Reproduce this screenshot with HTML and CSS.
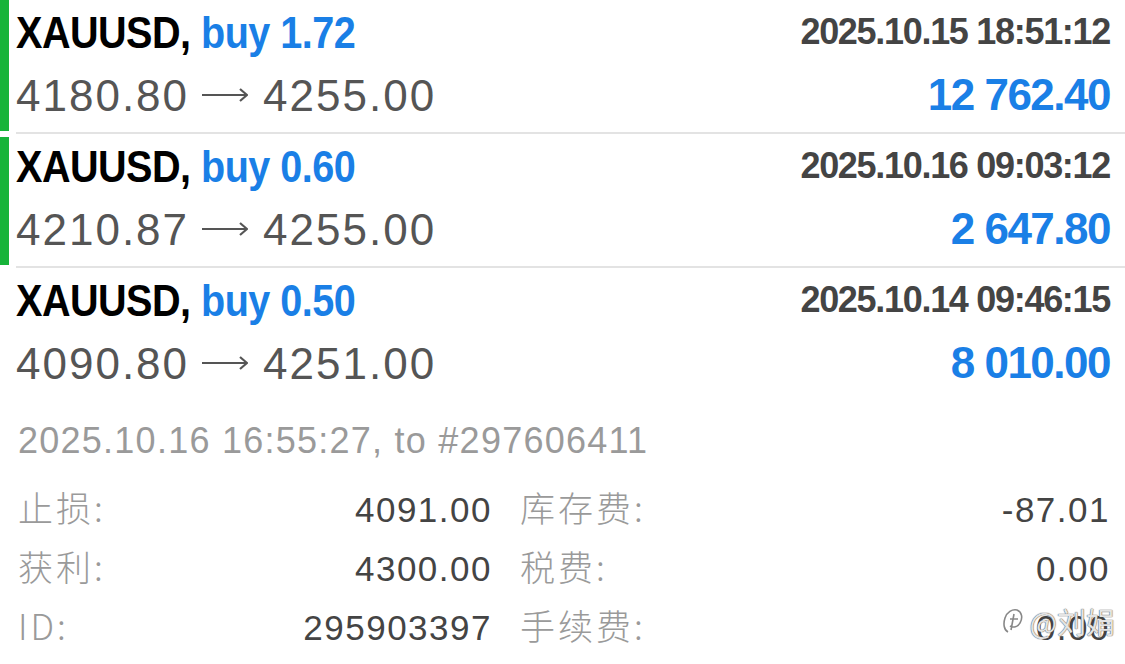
FILE: index.html
```html
<!DOCTYPE html>
<html lang="zh">
<head>
    <meta charset="UTF-8">
    <meta name="viewport" content="width=device-width, initial-scale=1.0">
    <title>持仓</title>
    <link rel="stylesheet" href="styles.css">
</head>
<body>

    <div class="list">
        <!-- 持仓 -->
        <div class="trade">
            <div class="mark"></div>
            <div class="body">
                <div class="left">
                    <div class="title">XAUUSD, <span class="side">buy 1.72</span></div>
                    <div class="prices">4180.80<svg class="arrow" width="46" height="14" viewBox="0 0 46 14"><path d="M0 7 H45 M38 1 L45 7 L38 13" fill="none" stroke="#555" stroke-width="2.2"/></svg>4255.00</div>
                </div>
                <div class="right">
                    <div class="time">2025.10.15 18:51:12</div>
                    <div class="profit">12 762.40</div>
                </div>
            </div>
        </div>

        <div class="trade">
            <div class="mark"></div>
            <div class="body">
                <div class="left">
                    <div class="title">XAUUSD, <span class="side">buy 0.60</span></div>
                    <div class="prices">4210.87<svg class="arrow" width="46" height="14" viewBox="0 0 46 14"><path d="M0 7 H45 M38 1 L45 7 L38 13" fill="none" stroke="#555" stroke-width="2.2"/></svg>4255.00</div>
                </div>
                <div class="right">
                    <div class="time">2025.10.16 09:03:12</div>
                    <div class="profit">2 647.80</div>
                </div>
            </div>
        </div>

        <div class="trade open">
            <div class="mark"></div>
            <div class="body">
                <div class="left">
                    <div class="title">XAUUSD, <span class="side">buy 0.50</span></div>
                    <div class="prices">4090.80<svg class="arrow" width="46" height="14" viewBox="0 0 46 14"><path d="M0 7 H45 M38 1 L45 7 L38 13" fill="none" stroke="#555" stroke-width="2.2"/></svg>4251.00</div>
                </div>
                <div class="right">
                    <div class="time">2025.10.14 09:46:15</div>
                    <div class="profit">8 010.00</div>
                </div>
            </div>
        </div>
    </div>

    <div class="details">
        <div class="info">2025.10.16 16:55:27, to #297606411</div>
        <div class="grid">
            <div class="cell"><span class="label">止损:</span><span class="value">4091.00</span></div>
            <div class="cell"><span class="label">库存费:</span><span class="value">-87.01</span></div>
            <div class="cell"><span class="label">获利:</span><span class="value">4300.00</span></div>
            <div class="cell"><span class="label">税费:</span><span class="value">0.00</span></div>
            <div class="cell"><span class="label">ID:</span><span class="value">295903397</span></div>
            <div class="cell"><span class="label">手续费:</span><span class="value">0.00</span></div>
        </div>
    </div>

    <div class="watermark">
        <svg width="22" height="30" viewBox="0 0 22 30">
            <path d="M6 26 C2 24 1 18 3 12 C5 6 10 3 15 4 C20 6 21 12 18 17 C16 21 11 22 8 20 M12 8 L9 24 M8 13 L16 13" fill="none" stroke="#888" stroke-width="1.6"/>
        </svg>
        <span>@刘娟</span>
    </div>

</body>
</html>
```

FILE: styles.css
```css
body {
    margin: 0;
    background: #fff;
    font-family: "Liberation Sans", Arial, "Noto Sans CJK SC", sans-serif;
    position: relative;
    width: 1125px;
    height: 664px;
    overflow: hidden;
}
.trade {
    display: flex;
    height: 134px;
}
.mark {
    width: 9px;
    background-color: #17b43a;
    margin-bottom: 3px;
}
.trade + .trade .mark {
    margin-top: 3px;
}
.trade.open .mark {
    background: none;
}
.body {
    flex: 1;
    display: flex;
    justify-content: space-between;
    margin-left: 7px;
    padding-right: 15px;
    border-bottom: 2px solid #e3e3e3;
}
.trade.open .body {
    border-bottom: none;
}
.title {
    font-weight: bold;
    font-size: 45px;
    line-height: 65px;
    color: #000;
    letter-spacing: -0.6px;
    transform: scaleX(0.88);
    transform-origin: left;
    white-space: nowrap;
}
.side {
    color: #1a7fe6;
}
.prices {
    font-size: 44px;
    line-height: 62px;
    color: #555;
    letter-spacing: 2px;
    white-space: nowrap;
}
.arrow {
    margin: 0 15px 0 13px;
    vertical-align: 9px;
}
.right {
    text-align: right;
}
.time {
    font-weight: bold;
    font-size: 36px;
    line-height: 63px;
    color: #444;
    letter-spacing: -1.3px;
}
.profit {
    font-weight: bold;
    font-size: 44px;
    line-height: 64px;
    color: #1a7fe6;
    letter-spacing: -1.5px;
}
.details {
    padding: 9px 15px 0 18px;
}
.info {
    font-size: 36px;
    line-height: 60px;
    color: #9a9a9a;
    letter-spacing: 1.25px;
    margin-bottom: 6px;
}
.grid {
    display: grid;
    grid-template-columns: 474px 1fr;
    column-gap: 28px;
}
.cell {
    display: flex;
    justify-content: space-between;
    align-items: baseline;
    height: 59px;
    line-height: 59px;
    font-size: 35px;
}
.label {
    color: #9a9a9a;
    font-family: "Noto Sans CJK SC", "Liberation Sans", sans-serif;
    font-weight: 300;
    font-size: 35px;
    letter-spacing: 3px;
}
.value {
    color: #444;
    letter-spacing: 1.5px;
}
.watermark {
    position: absolute;
    right: 10px;
    bottom: 22px;
    display: flex;
    align-items: center;
    gap: 6px;
    font-family: "Noto Sans CJK SC", sans-serif;
    font-size: 29px;
    color: rgba(255, 255, 255, 0.85);
    text-shadow: 0 0 1px #555, 0 0 1px #555;
}
```
